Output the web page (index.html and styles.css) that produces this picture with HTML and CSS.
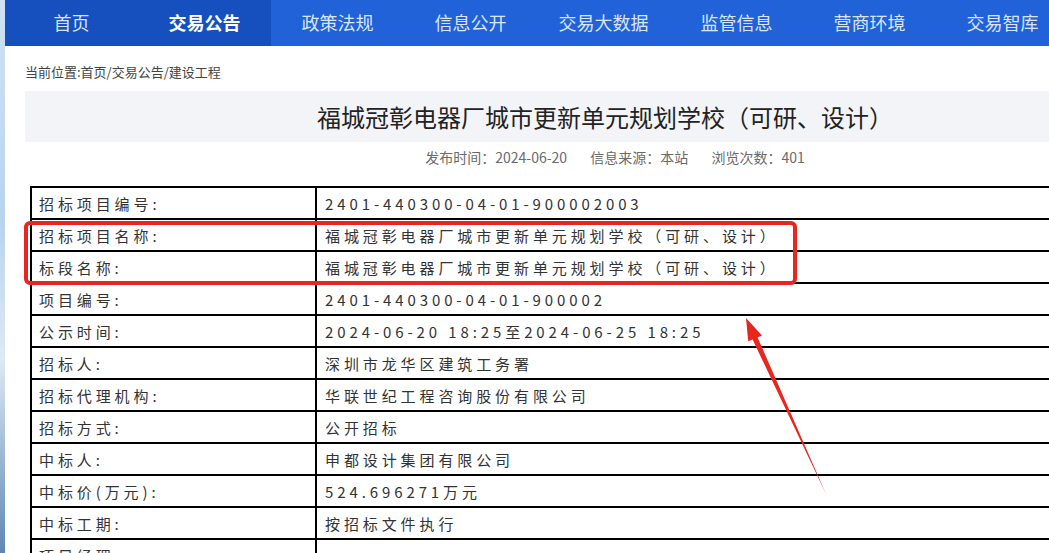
FILE: index.html
```html
<!DOCTYPE html>
<html lang="zh-CN">
<head>
  <meta charset="UTF-8">
  <title>福城冠彰电器厂城市更新单元规划学校（可研、设计）</title>
  <link rel="stylesheet" href="styles.css">
</head>
<body>
  <div class="page">
    <!-- top navigation -->
    <ul class="nav">
      <li class="nav-item dark">首页</li>
      <li class="nav-item dark active">交易公告</li>
      <li class="nav-item">政策法规</li>
      <li class="nav-item">信息公开</li>
      <li class="nav-item">交易大数据</li>
      <li class="nav-item">监管信息</li>
      <li class="nav-item">营商环境</li>
      <li class="nav-item">交易智库</li>
    </ul>

    <div class="crumb">当前位置:首页/交易公告/建设工程</div>

    <h1 class="title">福城冠彰电器厂城市更新单元规划学校（可研、设计）</h1>
    <div class="meta">
      <span>发布时间：2024-06-20</span>
      <span>信息来源：本站</span>
      <span>浏览次数：401</span>
    </div>

    <table class="info">
      <tr><td class="label">招标项目编号:</td><td>2401-440300-04-01-900002003</td></tr>
      <tr><td class="label">招标项目名称:</td><td>福城冠彰电器厂城市更新单元规划学校（可研、设计）</td></tr>
      <tr><td class="label">标段名称:</td><td>福城冠彰电器厂城市更新单元规划学校（可研、设计）</td></tr>
      <tr><td class="label">项目编号:</td><td>2401-440300-04-01-900002</td></tr>
      <tr><td class="label">公示时间:</td><td>2024-06-20 18:25至2024-06-25 18:25</td></tr>
      <tr><td class="label">招标人:</td><td>深圳市龙华区建筑工务署</td></tr>
      <tr><td class="label">招标代理机构:</td><td>华联世纪工程咨询股份有限公司</td></tr>
      <tr><td class="label">招标方式:</td><td>公开招标</td></tr>
      <tr><td class="label">中标人:</td><td>申都设计集团有限公司</td></tr>
      <tr><td class="label">中标价(万元):</td><td>524.696271万元</td></tr>
      <tr><td class="label">中标工期:</td><td>按招标文件执行</td></tr>
      <tr><td class="label">项目经理:</td><td></td></tr>
    </table>
  </div>

  <!-- red annotation drawn over the screenshot -->
  <div class="mark-box"></div>
  <svg class="mark-arrow" width="1049" height="553" viewBox="0 0 1049 553">
    <polygon points="746,318 762,335.5 757.6,337.4 826,494 752.6,339.4 748.2,341.2" fill="#e8261e"/>
  </svg>
</body>
</html>
```

FILE: styles.css
```css
/* base */
body {
  margin: 0;
  overflow: hidden;
  height: 553px;
  background: linear-gradient(180deg, #cfe2f6 0%, #b8d3ee 40%, #dde9f5 65%, #5d87b4 100%);
  font-family: "Noto Sans CJK SC", "Noto Sans", sans-serif;
  position: relative;
}

.page {
  margin-left: 5px;
  width: 1180px;
  min-height: 553px;
  background: #fff;
}

/* navigation bar */
.nav {
  display: flex;
  margin: 0;
  padding: 0;
  list-style: none;
  height: 46px;
  background: #2262d8;
}
.nav-item {
  width: 133px;
  flex: none;
  text-align: center;
  line-height: 44px;
  font-size: 18px;
  color: #d9e5f8;
}
.nav-item.dark {
  background: #1650be;
}
.nav-item.active {
  color: #fff;
  font-weight: bold;
}

/* breadcrumb */
.crumb {
  padding: 17px 0 0 20px;
  font-size: 13px;
  line-height: 18px;
  color: #444;
}

/* heading block */
.title {
  margin: 10px 0 0 20px;
  padding-left: 8px;
  width: 1144px;
  height: 51px;
  line-height: 51px;
  background: #f3f4f8;
  text-align: center;
  font-size: 24px;
  font-weight: normal;
  color: #222;
}
.meta {
  margin-top: 6px;
  padding-left: 34px;
  width: 1152px;
  text-align: center;
  font-size: 14px;
  line-height: 18px;
  color: #6a6a6a;
}
.meta span {
  margin: 0 10px;
}

/* detail table */
.info {
  margin: 20px 0 0 25px;
  width: 1145px;
  border-collapse: collapse;
}
.info td {
  border: 2px solid #000;
  height: 32px;
  padding: 0 0 0 8px;
  font-size: 15px;
  letter-spacing: 3.9px;
  color: #333;
  box-sizing: border-box;
  white-space: nowrap;
}
.info td.label {
  width: 285px;
  padding-left: 7px;
}

/* annotation overlay */
.mark-box {
  position: absolute;
  left: 24px;
  top: 221px;
  width: 765px;
  height: 56px;
  border: 4px solid #e8261e;
  border-radius: 6px;
}
.mark-arrow {
  position: absolute;
  left: 0;
  top: 0;
  pointer-events: none;
}
```
